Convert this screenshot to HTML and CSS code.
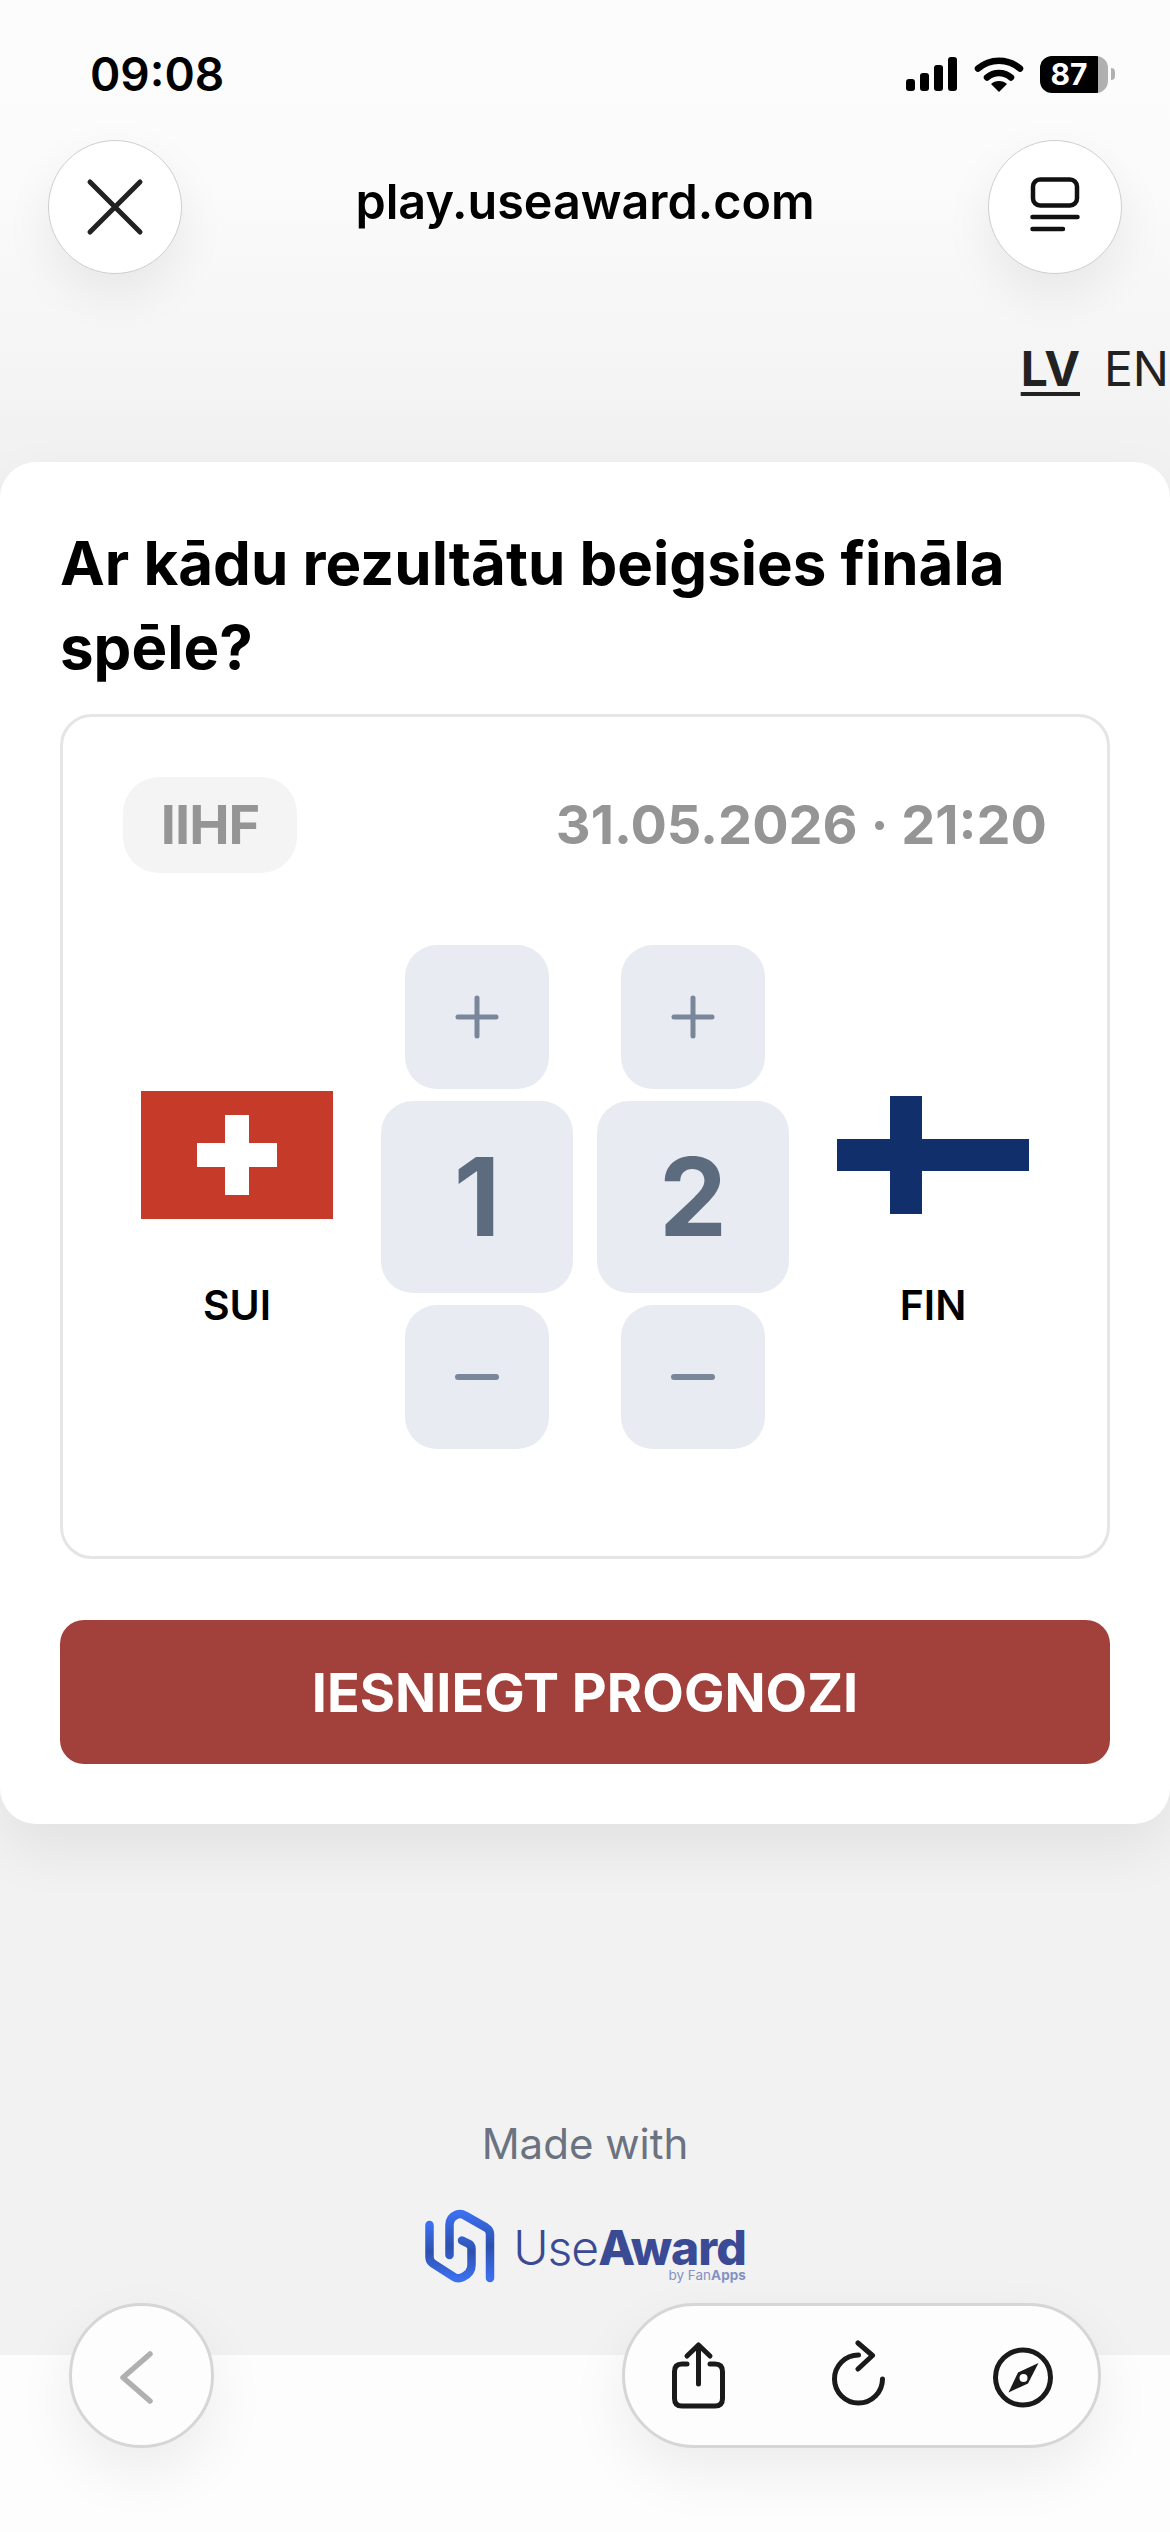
FILE: index.html
```html
<!DOCTYPE html>
<html lang="lv">

<head>
    <meta charset="UTF-8">
    <meta name="viewport" content="width=device-width, initial-scale=1.0">
    <title>play.useaward.com</title>
    <link rel="stylesheet" href="styles.css">
</head>

<body>
    <div class="page">
        <div class="status">
            <span class="time">09:08</span>
            <div class="status-icons">
                <svg class="signal" width="52" height="36" viewBox="0 0 52 36">
                    <rect x="0" y="23" width="9" height="12" rx="3"/>
                    <rect x="14" y="17" width="9" height="18" rx="3"/>
                    <rect x="28" y="9" width="9" height="26" rx="3"/>
                    <rect x="42" y="1" width="9" height="34" rx="3"/>
                </svg>
                <svg class="wifi" width="50" height="38" viewBox="0 0 50 38">
                    <path d="M4 13.5 C16 3 34 3 46 13.5" fill="none" stroke="#000" stroke-width="6.5" stroke-linecap="round"/>
                    <path d="M13 22.5 C20 16.5 30 16.5 37 22.5" fill="none" stroke="#000" stroke-width="6.5" stroke-linecap="round"/>
                    <path d="M17 29 C21 25 29 25 33 29 L25 37 Z"/>
                </svg>
                <div class="battery"><span class="battery-level">87</span></div>
                <span class="battery-nub"></span>
            </div>
        </div>

        <div class="browser-bar">
            <button class="round-btn">
                <svg width="60" height="60" viewBox="0 0 60 60">
                    <path d="M5 5 L55 55 M55 5 L5 55" stroke="#222" stroke-width="5" stroke-linecap="round"/>
                </svg>
            </button>
            <span class="address">play.useaward.com</span>
            <button class="round-btn">
                <svg width="52" height="60" viewBox="0 0 52 60">
                    <rect x="4" y="2.5" width="44" height="26" rx="7" fill="none" stroke="#111" stroke-width="4.5"/>
                    <path d="M3.5 40 H48.5 M3.5 52 H34" stroke="#111" stroke-width="4.5" stroke-linecap="round"/>
                </svg>
            </button>
        </div>

        <div class="lang">
            <a class="lang-item active">LV</a>
            <a class="lang-item">EN</a>
        </div>

        <div class="card">
            <h1 class="question">Ar kādu rezultātu beigsies fināla spēle?</h1>

            <div class="match">
                <div class="match-head">
                    <span class="league">IIHF</span>
                    <span class="date">31.05.2026 · 21:20</span>
                </div>
                <div class="match-row">
                    <div class="team">
                        <svg class="flag" width="192" height="128" viewBox="0 0 192 128">
                            <rect width="192" height="128" fill="#c63a2a"/>
                            <path d="M84 24 H108 V52 H136 V76 H108 V104 H84 V76 H56 V52 H84 Z" fill="#fff"/>
                        </svg>
                        <span class="team-name">SUI</span>
                    </div>
                    <div class="stepper">
                        <button class="step">
                            <svg width="44" height="44" viewBox="0 0 44 44"><path d="M22 3 V41 M3 22 H41" stroke="#7a8699" stroke-width="5" stroke-linecap="round"/></svg>
                        </button>
                        <div class="score">1</div>
                        <button class="step">
                            <svg width="44" height="44" viewBox="0 0 44 44"><path d="M3 22 H41" stroke="#7a8699" stroke-width="6" stroke-linecap="round"/></svg>
                        </button>
                    </div>
                    <div class="stepper">
                        <button class="step">
                            <svg width="44" height="44" viewBox="0 0 44 44"><path d="M22 3 V41 M3 22 H41" stroke="#7a8699" stroke-width="5" stroke-linecap="round"/></svg>
                        </button>
                        <div class="score">2</div>
                        <button class="step">
                            <svg width="44" height="44" viewBox="0 0 44 44"><path d="M3 22 H41" stroke="#7a8699" stroke-width="6" stroke-linecap="round"/></svg>
                        </button>
                    </div>
                    <div class="team">
                        <svg class="flag" width="192" height="128" viewBox="0 0 192 128">
                            <rect y="5" width="192" height="118" fill="#fff"/>
                            <rect y="48" width="192" height="32" fill="#102f6b"/>
                            <rect x="53" y="5" width="32" height="118" fill="#102f6b"/>
                        </svg>
                        <span class="team-name">FIN</span>
                    </div>
                </div>
            </div>

            <button class="submit">IESNIEGT PROGNOZI</button>
        </div>

        <div class="footer">
            <div class="made-with">Made with</div>
            <div class="logo">
                <svg width="80" height="80" viewBox="0 0 80 80">
                    <defs>
                        <linearGradient id="logoA" x1="0" y1="0" x2="0" y2="1">
                            <stop offset="0" stop-color="#3b6fee"/>
                            <stop offset="0.5" stop-color="#2d50ae"/>
                            <stop offset="1" stop-color="#3b6fee"/>
                        </linearGradient>
                    </defs>
                    <path d="M9.5 20 V52 Q9.5 56 13 58.5 L34 72 Q38 74.5 43 72 Q51.5 68 51.5 60 V44 Q51.5 40 48 38.5 L42 35.5" fill="none" stroke="url(#logoA)" stroke-width="8.5" stroke-linecap="round"/>
                    <path d="M29.5 50 V20 Q29.5 12.5 37 9.5 Q41 8 45 10.5 L66 22.5 Q70 25 70 29 V73" fill="none" stroke="url(#logoA)" stroke-width="8.5" stroke-linecap="round"/>
                </svg>
                <div class="wordmark">
                    <div class="wordmark-main"><span class="use">Use</span><span class="award">Award</span></div>
                    <div class="wordmark-sub">by Fan<b>Apps</b></div>
                </div>
            </div>
        </div>

        <div class="toolbar">
            <button class="back-btn">
                <svg width="36" height="56" viewBox="0 0 36 56">
                    <path d="M32 6 L5 29.5 L32 53" fill="none" stroke="#b0b0b0" stroke-width="5.5" stroke-linecap="round" stroke-linejoin="round"/>
                </svg>
            </button>
            <div class="tool-pill">
                <svg width="64" height="72" viewBox="0 0 64 72">
                    <path d="M18 24 H13 Q5.5 24 5.5 31.5 V58.5 Q5.5 66 13 66 H46 Q53.5 66 53.5 58.5 V31.5 Q53.5 24 46 24 H41" fill="none" stroke="#1a1a1a" stroke-width="5" stroke-linecap="round"/>
                    <path d="M29.5 44 V5 M18 16 L29.5 5 L41 16" fill="none" stroke="#1a1a1a" stroke-width="5" stroke-linecap="round" stroke-linejoin="round"/>
                </svg>
                <svg width="64" height="72" viewBox="0 0 64 72">
                    <path d="M28.5 15 A24 24 0 1 0 52.5 39" fill="none" stroke="#1a1a1a" stroke-width="5" stroke-linecap="round"/>
                    <path d="M28 3 L42.5 15.5 L28 29" fill="none" stroke="#1a1a1a" stroke-width="5" stroke-linecap="round" stroke-linejoin="round"/>
                </svg>
                <svg width="64" height="72" viewBox="0 0 64 72">
                    <circle cx="33" cy="37.5" r="27.5" fill="none" stroke="#1a1a1a" stroke-width="5"/>
                    <path d="M48.5 23 L38 43.5 L18.5 52.5 L28 32.5 Z" fill="#1a1a1a"/>
                    <circle cx="33.5" cy="38" r="4" fill="#fff"/>
                </svg>
            </div>
        </div>
    </div>
</body>

</html>
```

FILE: styles.css
```css
* {
    box-sizing: border-box;
}

body {
    margin: 0;
    font-family: "Inter", "Noto Sans", sans-serif;
    color: #000;
}

button {
    font-family: inherit;
    padding: 0;
    border: 0;
    cursor: pointer;
}

.page {
    position: relative;
    width: 1170px;
    height: 2532px;
    overflow: hidden;
    background: linear-gradient(#fcfcfc 0, #fbfbfb 180px, #f2f2f2 440px);
}

/* status bar */
.status {
    display: flex;
    justify-content: space-between;
    align-items: center;
    height: 140px;
    padding: 54px 55px 46px 90px;
}

.time {
    font-size: 46px;
    font-weight: 600;
    line-height: 40px;
}

.status-icons {
    display: flex;
    align-items: center;
}

.wifi {
    margin-left: 16px;
}

.battery {
    width: 68px;
    height: 37px;
    margin-left: 16px;
    border-radius: 12px;
    background: linear-gradient(90deg, #000 85%, #b0b0b0 85%);
    color: #fff;
    font-size: 30px;
    font-weight: 700;
    line-height: 37px;
    text-align: center;
    padding-right: 10px;
}

.battery-nub {
    width: 4px;
    height: 12px;
    margin-left: 3px;
    border-radius: 0 4px 4px 0;
    background: #b0b0b0;
}

/* browser bar */
.browser-bar {
    display: flex;
    justify-content: space-between;
    align-items: center;
    padding: 0 48px;
}

.round-btn {
    display: flex;
    align-items: center;
    justify-content: center;
    width: 134px;
    height: 134px;
    border-radius: 50%;
    background: #fff;
    border: 1.5px solid #cfcfcf;
    box-shadow: 0 20px 50px rgba(0, 0, 0, 0.07);
}

.round-btn svg {
    display: block;
}

.address {
    font-size: 48.5px;
    font-weight: 600;
    line-height: 60px;
    margin-top: -11px;
}

/* language switch */
.lang {
    display: flex;
    justify-content: flex-end;
    gap: 24px;
    margin-top: 67px;
    padding-right: 1px;
    font-size: 48px;
    line-height: 56px;
    color: #222;
}

.lang-item.active {
    font-weight: 700;
    text-decoration: underline;
    text-underline-offset: 6px;
    text-decoration-thickness: 4px;
}

/* card */
.card {
    margin-top: 65px;
    padding: 59px 60px 60px;
    border-radius: 36px;
    background: #fff;
    box-shadow: 0 24px 60px rgba(0, 0, 0, 0.07);
}

.question {
    margin: 0 0 25px;
    font-size: 60px;
    font-weight: 700;
    line-height: 84px;
}

.match {
    height: 845px;
    padding: 60px 60px 0;
    border: 3px solid #e5e5e5;
    border-radius: 32px;
}

.match-head {
    display: flex;
    justify-content: space-between;
    align-items: center;
}

.league {
    width: 174px;
    height: 96px;
    border-radius: 36px;
    background: #f4f4f4;
    color: #959595;
    font-size: 54px;
    font-weight: 700;
    letter-spacing: -1px;
    line-height: 96px;
    text-align: center;
}

.date {
    margin-top: -2px;
    color: #959595;
    font-size: 54px;
    font-weight: 700;
}

.match-row {
    display: flex;
    justify-content: center;
    gap: 24px;
    margin-top: 72px;
}

.team {
    display: flex;
    flex-direction: column;
    align-items: center;
    width: 192px;
    padding-top: 146px;
}

.team:first-child {
    margin-right: 24px;
}

.team:last-child {
    margin-left: 24px;
}

.flag {
    display: block;
}

.team-name {
    margin-top: 62px;
    font-size: 41px;
    font-weight: 600;
    line-height: 48px;
}

.stepper {
    display: flex;
    flex-direction: column;
    align-items: center;
    gap: 12px;
    width: 192px;
}

.step {
    display: flex;
    align-items: center;
    justify-content: center;
    width: 144px;
    height: 144px;
    border-radius: 32px;
    background: #e8ebf2;
}

.score {
    width: 192px;
    height: 192px;
    border-radius: 32px;
    background: #e8ebf2;
    color: #5d6b7f;
    font-size: 108px;
    font-weight: 700;
    line-height: 192px;
    text-align: center;
}

.submit {
    display: block;
    width: 100%;
    height: 144px;
    margin-top: 61px;
    border-radius: 24px;
    background: #a2403c;
    color: #fff;
    font-size: 54px;
    font-weight: 700;
}

/* footer */
.footer {
    margin-top: 290px;
    text-align: center;
}

.made-with {
    color: #6b7280;
    font-size: 42px;
    line-height: 60px;
}

.logo {
    display: flex;
    justify-content: center;
    gap: 13px;
    margin-top: 31px;
    padding-right: 4px;
}

.logo svg {
    display: block;
}

.wordmark {
    padding-top: 21px;
    color: #3a4a94;
    text-align: right;
}

.wordmark-main {
    font-size: 48px;
    line-height: 44px;
    letter-spacing: -1px;
}

.use {
    font-weight: 300;
}

.award {
    font-weight: 800;
}

.wordmark-sub {
    margin-top: -3px;
    color: #8491c4;
    font-size: 13.5px;
    line-height: 16px;
}

/* bottom toolbar */
.toolbar {
    position: absolute;
    left: 0;
    right: 0;
    bottom: 0;
    display: flex;
    justify-content: space-between;
    align-items: flex-start;
    height: 177px;
    padding: 0 69px;
    background: #fdfdfd;
}

.back-btn {
    display: flex;
    align-items: center;
    justify-content: center;
    width: 145px;
    height: 145px;
    margin-top: -52px;
    padding-right: 12px;
    border-radius: 50%;
    background: #fdfdfd;
    border: 3px solid #d6d6d6;
    box-shadow: 0 24px 60px rgba(0, 0, 0, 0.07);
}

.tool-pill {
    display: flex;
    justify-content: space-between;
    align-items: center;
    width: 479px;
    height: 145px;
    margin-top: -52px;
    padding: 0 44px;
    border-radius: 73px;
    background: #fdfdfd;
    border: 3px solid #d6d6d6;
    box-shadow: 0 24px 60px rgba(0, 0, 0, 0.07);
}

.tool-pill svg {
    display: block;
}
```
